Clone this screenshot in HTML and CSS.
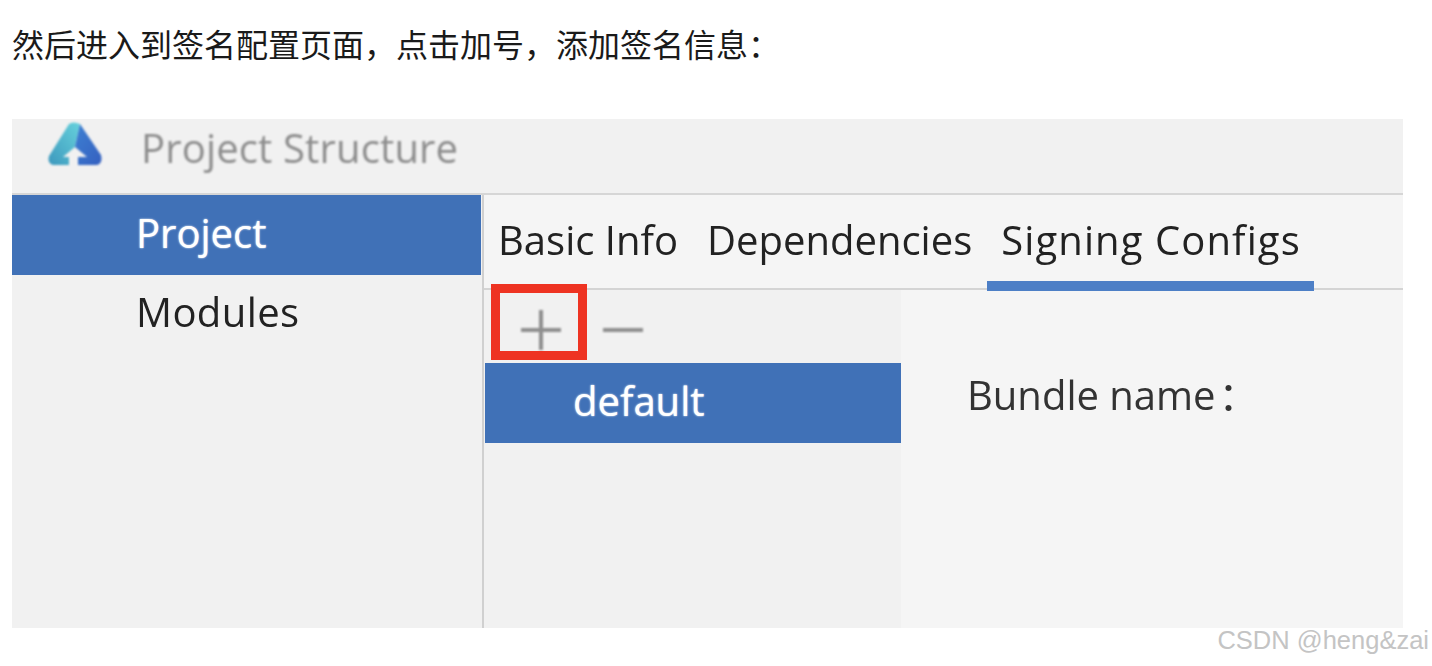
FILE: index.html
```html
<!DOCTYPE html>
<html lang="zh">
<head>
<meta charset="utf-8">
<title>签名配置</title>
<link rel="stylesheet" href="styles.css">
</head>
<body>
<p class="intro">然后进入到签名配置页面，点击加号，添加签名信息：</p>
<figure class="shot">
  <header class="titlebar">
    <svg class="logo" width="56" height="46" viewBox="0 0 56 46">
      <defs>
        <linearGradient id="lg" x1="0" y1="1" x2="1" y2="0">
          <stop offset="0" stop-color="#3d98bd"/>
          <stop offset="1" stop-color="#66d2dc"/>
        </linearGradient>
        <linearGradient id="lb" x1="0" y1="0" x2="1" y2="1">
          <stop offset="0" stop-color="#3d80d2"/>
          <stop offset="1" stop-color="#3560c0"/>
        </linearGradient>
      </defs>
      <path d="M22 3 Q26 0 33 3 L28 26 L16 36 L22 36 L22 44 L6 44 Q0 42 2 35 Z" fill="url(#lg)"/>
      <path d="M33 3 L54 34 Q56 42 50 44 L31 44 L31 36 L40 36 L28 26 Z" fill="url(#lb)"/>
    </svg>
    <span class="title">Project Structure</span>
  </header>
  <div class="body">
    <nav class="side">
      <div class="side-item is-on">Project</div>
      <div class="side-item">Modules</div>
    </nav>
    <section class="main">
      <div class="tabs">
        <span class="tab">Basic Info</span>
        <span class="tab">Dependencies</span>
        <span class="tab is-on">Signing Configs</span>
      </div>
      <div class="panes">
        <div class="list">
          <div class="tools">
            <span class="tool plus"></span>
            <span class="tool minus"></span>
            <span class="mark"></span>
          </div>
          <div class="list-item">default</div>
        </div>
        <div class="detail">Bundle name<span class="colon">：</span></div>
      </div>
    </section>
  </div>
</figure>
<div class="wm">CSDN @heng&amp;zai</div>
</body>
</html>
```
FILE: styles.css
```css
* { box-sizing: border-box; }
html, body { margin: 0; height: 666px; overflow: hidden; background: #fff; }
body { padding: 0 0 0 12px; position: relative; font-family: "Open Sans", "Noto Sans", sans-serif; }
.intro {
  margin: 0;
  height: 119px;
  padding-top: 23px;
  font: 32px/40px "Noto Sans CJK SC", sans-serif;
  color: #1a1a1a;
}
.shot { margin: 0; width: 1391px; height: 509px; background: #f4f4f4; display: flex; flex-direction: column; overflow: hidden; }
.titlebar {
  height: 76px;
  flex: none;
  background: #f1f1f1;
  border-bottom: 2px solid #d6d6d6;
  display: flex;
  align-items: flex-start;
  padding: 2px 0 0 35px;
}
.logo { flex: none; filter: blur(.8px); }
.title { margin: 2px 0 0 38px; font-size: 40px; letter-spacing: .15px; line-height: 50px; color: #8d8d8d; filter: blur(.8px); white-space: nowrap; }
.body { flex: 1; display: flex; min-height: 0; }
.side { width: 472px; flex: none; background: #f1f1f1; border-right: 2px solid #d0d0d0; display: flex; flex-direction: column; }
.side-item { height: 80px; flex: none; padding: 13px 0 0 124px; font-size: 40px; line-height: 50px; color: #222; filter: blur(.7px); }
.side-item + .side-item { height: 76px; padding-top: 12px; letter-spacing: .4px; }
.side-item.is-on { background: #4071b7; color: #fff; margin-right: 1px; filter: none; text-shadow: 0 0 2px #fff; }
.main { flex: 1; display: flex; flex-direction: column; min-width: 0; }
.tabs {
  height: 95px;
  flex: none;
  position: relative;
  z-index: 1;
  background: #f5f5f5;
  border-bottom: 2px solid #d4d4d4;
  display: flex;
  gap: 29px;
  padding: 20px 0 0 14px;
}
.tab { font-size: 40px; line-height: 50px; color: #222; position: relative; filter: blur(.7px); white-space: nowrap; }
.tab.is-on { letter-spacing: 1.1px; }
.tab.is-on::after { content: ""; position: absolute; left: -14px; right: -13px; top: 66px; height: 10px; background: #4d7fc6; }
.panes { flex: 1; display: flex; min-height: 0; }
.list { width: 417px; flex: none; background: #f1f1f1; padding-left: 1px; }
.tools { height: 73px; position: relative; z-index: 2; }
.tool { position: absolute; background: #8e8e8e; filter: blur(.8px); }
.plus { left: 36px; top: 38px; width: 40px; height: 4px; }
.plus::after { content: ""; position: absolute; left: 18px; top: -18px; width: 4px; height: 40px; background: #8e8e8e; }
.minus { left: 118px; top: 38px; width: 40px; height: 4px; }
.mark { position: absolute; left: 6px; top: -6px; width: 96px; height: 76px; border: 9px solid #ee3322; }
.list-item { height: 80px; background: #4071b7; color: #fff; font-size: 40px; line-height: 50px; padding: 13px 0 0 88px; text-shadow: 0 0 2px #fff; }
.detail { flex: 1; padding: 78px 0 0 66px; font-size: 40px; line-height: 50px; color: #333; filter: blur(.7px); background: #f5f5f5; white-space: nowrap; }
.colon { margin-left: 3px; font-family: "Noto Sans CJK SC", sans-serif; }
.wm {
  position: absolute;
  right: 3px;
  top: 625px;
  font: 25.5px/30px "Liberation Sans", sans-serif;
  color: #c4c4c4;
}
```
